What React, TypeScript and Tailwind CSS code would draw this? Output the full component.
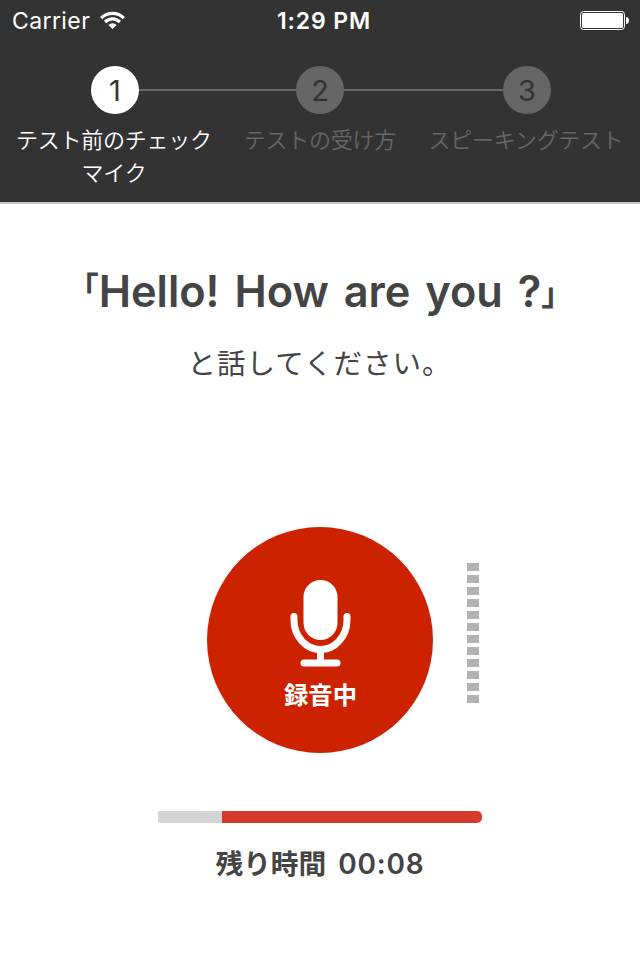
import React from "react";

const steps = [
  { n: 1, lines: ["テスト前のチェック", "マイク"], active: true },
  { n: 2, lines: ["テストの受け方"], active: false },
  { n: 3, lines: ["スピーキングテスト"], active: false },
];

function StatusBar() {
  return (
    <div className="flex h-10 items-center justify-between pl-3 pr-[11px] text-white">
      <div className="flex w-[200px] items-center gap-[10px]">
        <span className="pt-0.5 text-[23px] leading-10 tracking-[0.4px]">Carrier</span>
        <svg width="25" height="19" viewBox="0 0 25 19" fill="none" stroke="white" strokeWidth="3.2">
          <path d="M1.2 7.1a16 16 0 0 1 22.6 0" />
          <path d="M5.1 11a10.5 10.5 0 0 1 14.8 0" />
          <path d="M12.5 18 8.4 13.9a5.8 5.8 0 0 1 8.2 0z" fill="white" stroke="none" />
        </svg>
      </div>
      <span className="pt-0.5 pl-[7px] text-[23px] leading-10 font-semibold tracking-[0.9px] whitespace-nowrap">1:29 PM</span>
      <div className="flex w-[200px] justify-end">
        <svg width="49" height="19" viewBox="0 0 49 19">
          <rect x="0.5" y="0.5" width="44" height="18" rx="3" fill="none" stroke="white" />
          <rect x="2" y="2" width="41" height="15" rx="1.5" fill="white" />
          <path d="M46 6c4 0 4 7 0 7z" fill="white" />
        </svg>
      </div>
    </div>
  );
}

function Stepper() {
  return (
    <div className="pt-[26px]">
      <div className="flex items-center pl-[91px]">
        {steps.map((s, i) => (
          <React.Fragment key={s.n}>
            {i > 0 && <div className={`h-0.5 bg-[#666] ${i === 1 ? "w-[157px]" : "w-[159px]"}`} />}
            <div
              className={`flex size-12 items-center justify-center rounded-full pt-px text-[29px] leading-none text-[#333] ${s.active ? "bg-white" : "bg-[#666]"}`}
            >
              {s.n}
            </div>
          </React.Fragment>
        ))}
      </div>
      <div className="flex justify-between pt-[10px] pr-[11px] pl-[11px]">
        {steps.map((s) => (
          <div
            key={s.n}
            className={`w-[206px] text-center text-[22px] leading-[33px] font-[350] tracking-[-0.25px] whitespace-nowrap ${s.active ? "text-white" : "text-[#666]"}`}
          >
            {s.lines.map((l) => (
              <div key={l}>{l}</div>
            ))}
          </div>
        ))}
      </div>
    </div>
  );
}

function RecordButton() {
  return (
    <button className="flex size-[226px] flex-col items-center rounded-full bg-[#cc2200] pt-[53px] text-white">
      <svg width="62" height="88" viewBox="0 0 62 88" fill="none" stroke="white" strokeLinecap="round">
        <rect x="14.5" y="0" width="34" height="60" rx="17" fill="white" stroke="none" />
        <path d="M5 36.5v3.5a26.5 29.5 0 0 0 53 0v-3.5" strokeWidth="7" />
        <path d="M31.5 71v11" strokeWidth="7" strokeLinecap="butt" />
        <path d="M15 83h33" strokeWidth="7" />
      </svg>
      <span className="mt-[9px] pl-px text-[24.4px] leading-9 font-bold">録音中</span>
    </button>
  );
}

export default function App() {
  return (
    <div className="flex h-[960px] w-[640px] flex-col overflow-hidden bg-white font-['Inter','Noto_Sans_CJK_JP',sans-serif]">
      <header className="h-[204px] border-b-2 border-[#c8c8c8] bg-[#333]">
        <StatusBar />
        <Stepper />
      </header>
      <main className="flex flex-col items-center text-[#444]">
        <h1 className="mt-[59px] flex h-[56px] items-center text-[43.3px] leading-[56px] font-semibold whitespace-nowrap [word-spacing:4px]">
          <span className="flex w-[38px] justify-end pb-2.5 font-['Noto_Sans_CJK_JP',sans-serif] text-[32px]">「</span>
          <span>Hello! How are you ?</span>
          <span className="w-[38px] font-['Noto_Sans_CJK_JP',sans-serif] text-[32px]">」</span>
        </h1>
        <p className="mt-[24px] pr-px text-[28.5px] leading-[41px] tracking-[1px]">と話してください。</p>
        <div className="mt-[143px] flex items-start pl-[46px]">
          <RecordButton />
          <div className="mt-9 ml-[34px] flex flex-col gap-1">
            {Array.from({ length: 12 }, (_, i) => (
              <div key={i} className="h-2 w-3 bg-[#b2b2b2]" />
            ))}
          </div>
        </div>
        <div className="mt-[58px] flex h-3 w-[324px] overflow-hidden rounded-l-[2px] rounded-r-[5px]">
          <div className="w-16 bg-[#d4d4d4]" />
          <div className="flex-1 bg-[#d7392d]" />
        </div>
        <p className="mt-[21px] flex gap-[12px] text-[28px] leading-10 font-semibold">
          <span className="text-[27.7px]">残り時間</span>
          <span className="tracking-[0.8px]">00:08</span>
        </p>
      </main>
    </div>
  );
}
